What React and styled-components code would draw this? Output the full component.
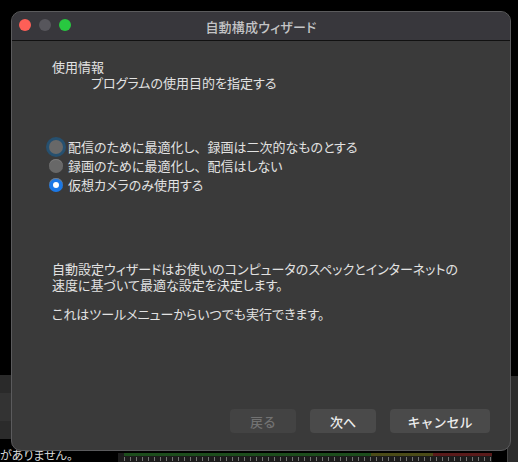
import React from "react";
import styled, { createGlobalStyle } from "styled-components";

const GlobalStyle = createGlobalStyle`
  html, body {
    margin: 0;
    padding: 0;
    background: #000;
  }
  body {
    font-family: "Noto Sans CJK JP", "Noto Sans", sans-serif;
    font-feature-settings: "palt";
    -webkit-font-smoothing: antialiased;
  }
`;

const options = [
  { id: "stream", label: "配信のために最適化し、録画は二次的なものとする", state: "focus" },
  { id: "record", label: "録画のために最適化し、配信はしない", state: "off" },
  { id: "camera", label: "仮想カメラのみ使用する", state: "on" },
];

// keep the ideographic comma full width, as the system font does
const withComma = (text) =>
  text.split("、").flatMap((part, i) =>
    i === 0 ? [part] : [<Comma key={i}>、</Comma>, part]
  );

const App = () => {
  return (
    <>
      <GlobalStyle />
      <Desktop>
        <Backdrop>
          <LeftDock>
            <DockBand $top={375} $h={18} $c="#2a2a2a" />
            <DockBand $top={393} $h={28} $c="#333" />
            <DockBand $top={421} $h={18} $c="#2b2b2b" />
          </LeftDock>
          <RightDock />
          <StatusText>がありません。</StatusText>
          <Meter>
            <MeterBar />
            <MeterTicks />
          </Meter>
        </Backdrop>

        <Window>
          <TitleBar>
            <Lights>
              <Light $c="#fe5f57" />
              <Light $c="#57565c" />
              <Light $c="#28c840" />
            </Lights>
            <Title>自動構成ウィザード</Title>
          </TitleBar>

          <Body>
            <Heading>
              <h4>使用情報</h4>
              <p>プログラムの使用目的を指定する</p>
            </Heading>

            <RadioList>
              {options.map((opt) => (
                <RadioRow key={opt.id}>
                  <Radio $state={opt.state} />
                  <span>{withComma(opt.label)}</span>
                </RadioRow>
              ))}
            </RadioList>

            <Info>
              <p>
                自動設定ウィザードはお使いのコンピュータのスペックとインターネットの
                <br />
                速度に基づいて最適な設定を決定します。
              </p>
              <p>これはツールメニューからいつでも実行できます。</p>
            </Info>

            <Footer>
              <Button disabled>戻る</Button>
              <Button>次へ</Button>
              <Button $wide>キャンセル</Button>
            </Footer>
          </Body>
        </Window>
      </Desktop>
    </>
  );
};

const Comma = styled.span`
  font-feature-settings: normal;
`;

const Desktop = styled.div`
  position: relative;
  width: 518px;
  height: 462px;
  overflow: hidden;
  background: #000;
`;

const Backdrop = styled.div`
  position: absolute;
  inset: 0;
`;

const LeftDock = styled.div`
  position: absolute;
  left: 0;
  top: 0;
  width: 14px;
  height: 462px;
`;

const DockBand = styled.div`
  position: absolute;
  left: 0;
  right: 0;
  top: ${(p) => p.$top}px;
  height: ${(p) => p.$h}px;
  background: ${(p) => p.$c};
`;

const RightDock = styled.div`
  position: absolute;
  right: 0;
  top: 376px;
  width: 10px;
  height: 86px;
  background: #2c2c2c;
  border-left: 1px solid #444;
`;

const StatusText = styled.div`
  position: absolute;
  left: 0;
  top: 447px;
  font-size: 12px;
  color: #d8d8d8;
  line-height: 15px;
  white-space: nowrap;
`;

const Meter = styled.div`
  position: absolute;
  left: 118px;
  right: 26px;
  top: 453px;
  height: 9px;
  background: #1c1c1c;
`;

const MeterBar = styled.div`
  height: 3px;
  margin-left: 6px;
  background: linear-gradient(
    to right,
    #1c4d1c 0%,
    #1c4d1c 67%,
    #4b4b17 67%,
    #4b4b17 84%,
    #5a1a1a 84%,
    #5a1a1a 100%
  );
`;

const MeterTicks = styled.div`
  height: 4px;
  margin: 1px 0 0 6px;
  background: repeating-linear-gradient(
    to right,
    #9a9a9a 0,
    #9a9a9a 1px,
    transparent 1px,
    transparent 6px
  );
  opacity: 0.7;
`;

const Window = styled.div`
  position: absolute;
  left: 11px;
  top: 11px;
  width: 500px;
  height: 440px;
  display: flex;
  flex-direction: column;
  background: #3a3a3a;
  border: 1px solid #5b5b5d;
  border-radius: 10px;
  box-sizing: border-box;
  overflow: hidden;
`;

const TitleBar = styled.div`
  position: relative;
  height: 28px;
  flex: none;
  display: flex;
  align-items: center;
  justify-content: center;
  background: #38373c;
  border-bottom: 1px solid #111;
`;

const Lights = styled.div`
  position: absolute;
  left: 7px;
  top: 7px;
  display: flex;
  gap: 8px;
`;

const Light = styled.span`
  width: 12px;
  height: 12px;
  border-radius: 50%;
  background: ${(p) => p.$c};
`;

const Title = styled.div`
  font-size: 13px;
  font-weight: 500;
  color: #c4c4c6;
  letter-spacing: 0.2px;
`;

const Body = styled.div`
  flex: 1;
  display: flex;
  flex-direction: column;
  padding: 18px 20px 17px 40px;
  color: #e2e2e2;
  font-size: 13px;
  line-height: 16px;
`;

const Heading = styled.div`
  h4 {
    margin: 0;
    font-size: 13px;
    font-weight: 400;
  }
  p {
    margin: 0;
    padding-left: 39px;
  }
`;

const RadioList = styled.div`
  display: flex;
  flex-direction: column;
  gap: 3px;
  margin-top: 48px;
`;

const RadioRow = styled.div`
  display: flex;
  align-items: center;
  gap: 5px;
  height: 16px;
  margin-left: -4px;
`;

const Radio = styled.span`
  position: relative;
  width: 14px;
  height: 14px;
  margin-left: 1px;
  border-radius: 50%;
  box-sizing: border-box;
  background: ${(p) => (p.$state === "on" ? "#1b78e6" : "#686868")};
  box-shadow: ${(p) =>
    p.$state === "focus" ? "0 0 0 3px #26506f" : "inset 0 1px 0 #7a7a7a"};

  &::after {
    content: "";
    display: ${(p) => (p.$state === "on" ? "block" : "none")};
    position: absolute;
    left: 4px;
    top: 4px;
    width: 6px;
    height: 6px;
    border-radius: 50%;
    background: #fff;
  }
`;

const Info = styled.div`
  margin-top: 68px;

  p {
    margin: 0 0 13px;
  }
`;

const Footer = styled.div`
  margin-top: auto;
  display: flex;
  justify-content: flex-end;
  gap: 14px;
`;

const Button = styled.button`
  width: ${(p) => (p.$wide ? "100px" : "66px")};
  height: 24px;
  border: none;
  border-radius: 4px;
  background: #4a4a4a;
  color: #ececec;
  font-family: inherit;
  font-size: 13px;
  font-weight: 500;
  padding: 0;

  &:disabled {
    background: #434343;
    color: #727272;
  }
`;

export default App;
